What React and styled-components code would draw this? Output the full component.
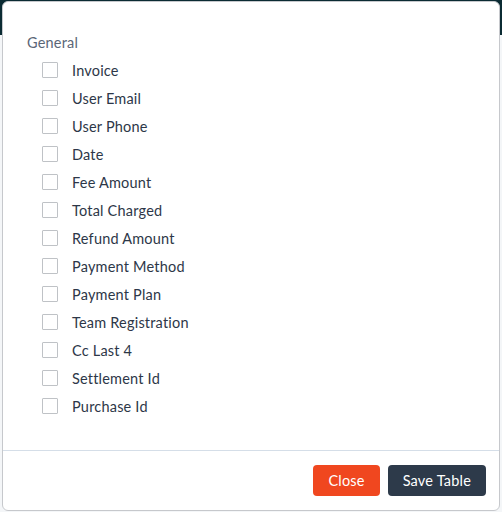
import React, { useState } from "react";
import styled, { createGlobalStyle } from "styled-components";

const GlobalStyle = createGlobalStyle`
  html, body {
    margin: 0;
    padding: 0;
    height: 100%;
  }
  body {
    font-family: Lato, "Noto Sans", sans-serif;
    background: #f4f6f8;
    overflow: hidden;
  }
`;

const columns = [
  "Invoice",
  "User Email",
  "User Phone",
  "Date",
  "Fee Amount",
  "Total Charged",
  "Refund Amount",
  "Payment Method",
  "Payment Plan",
  "Team Registration",
  "Cc Last 4",
  "Settlement Id",
  "Purchase Id",
];

const Page = styled.div`
  height: 512px;
  display: flex;
  flex-direction: column;
`;

const TopBar = styled.div`
  height: 35px;
  background: #0b2b33;
`;

const Backdrop = styled.div`
  position: fixed;
  inset: 0;
  padding: 1px 2px 1px 2px;
  display: flex;
`;

const Modal = styled.div`
  flex: 1;
  display: flex;
  flex-direction: column;
  background: #ffffff;
  border: 1px solid #c6c8cc;
  border-radius: 6px;
`;

const Body = styled.div`
  flex: 1;
  padding: 31px 24px 0 24px;
`;

const GroupTitle = styled.div`
  font-size: 14.5px;
  line-height: 20px;
  letter-spacing: 0.2px;
  color: #5b6677;
  margin-bottom: 3px;
`;

const List = styled.div`
  display: flex;
  flex-direction: column;
  padding-left: 15px;
`;

const Row = styled.label`
  display: flex;
  align-items: center;
  gap: 14px;
  height: 28px;
  cursor: pointer;
  font-size: 14.5px;
  letter-spacing: 0.2px;
  color: #2d3748;
`;

const Box = styled.span`
  width: 16px;
  height: 16px;
  box-sizing: border-box;
  border: 1px solid ${(p) => (p.checked ? "#2d3a4a" : "#bfc2c6")};
  background: ${(p) => (p.checked ? "#2d3a4a" : "#fff")};
  border-radius: 1px;
  flex-shrink: 0;
`;

const Footer = styled.div`
  border-top: 1px solid #d5dee8;
  display: flex;
  justify-content: flex-end;
  gap: 8px;
  padding: 14px 13px 14px 0;
`;

const Button = styled.button`
  height: 31px;
  padding: 0 ${(p) => p.pad}px;
  border: none;
  border-radius: 4px;
  font-family: Lato, "Noto Sans", sans-serif;
  font-size: 14.5px;
  letter-spacing: 0.2px;
  color: #fff;
  background: ${(p) => p.bg};
  cursor: pointer;
`;

export default function App() {
  const [checked, setChecked] = useState({});
  const toggle = (name) => setChecked((c) => ({ ...c, [name]: !c[name] }));

  return (
    <Page>
      <GlobalStyle />
      <TopBar />
      <Backdrop>
        <Modal>
          <Body>
            <GroupTitle>General</GroupTitle>
            <List>
              {columns.map((name) => (
                <Row key={name} onClick={() => toggle(name)}>
                  <Box checked={!!checked[name]} />
                  {name}
                </Row>
              ))}
            </List>
          </Body>
          <Footer>
            <Button bg="#f0471f" pad={15}>Close</Button>
            <Button bg="#2d3a4a" pad={15}>Save Table</Button>
          </Footer>
        </Modal>
      </Backdrop>
    </Page>
  );
}
